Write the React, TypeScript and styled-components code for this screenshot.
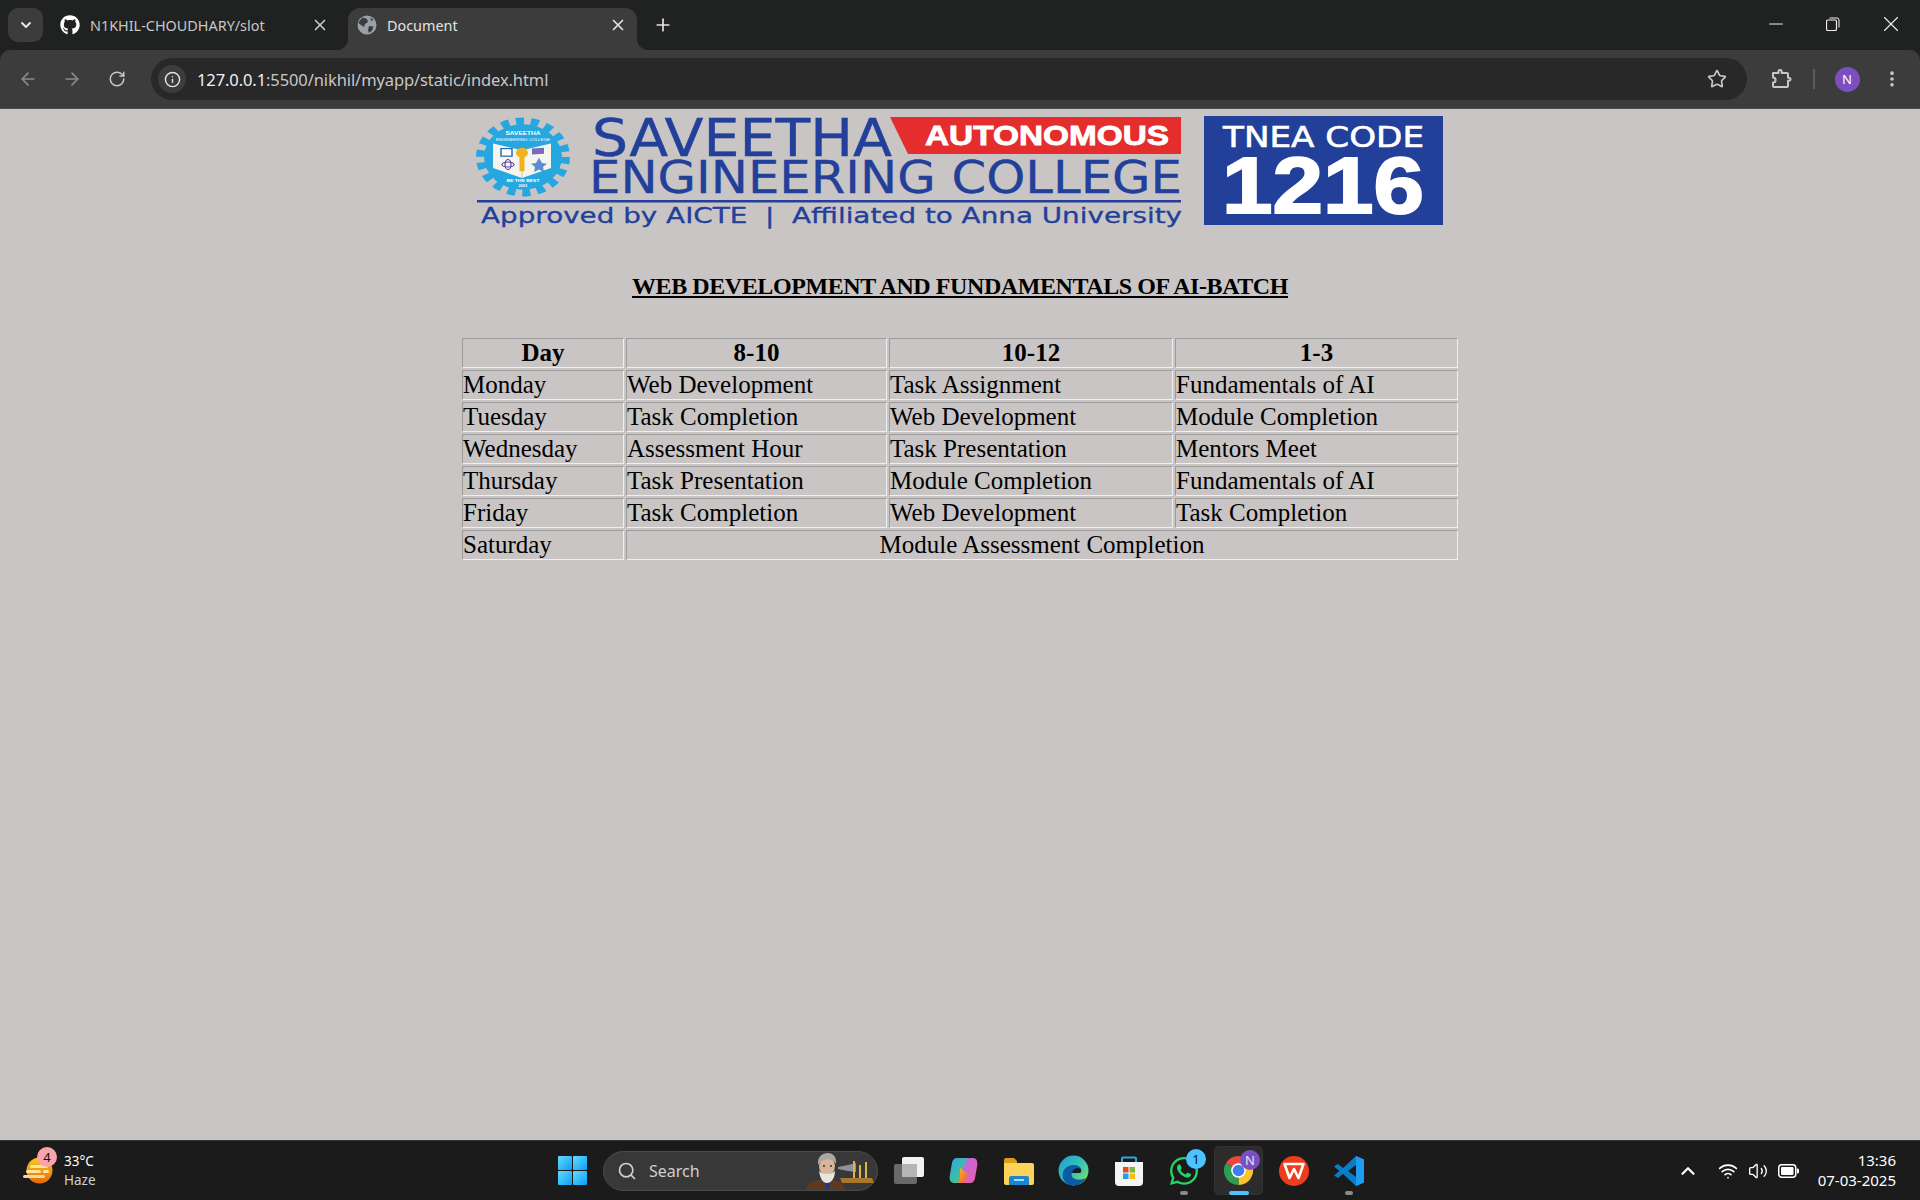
import React, { FC, ReactNode } from "react";
import styled, { createGlobalStyle } from "styled-components";
import {
  ArrowLeft,
  ArrowRight,
  ChevronDown,
  ChevronUp,
  EllipsisVertical,
  Info,
  Minus,
  Plus,
  RotateCw,
  Search,
  Star,
  Volume2,
  Wifi,
  X,
} from "lucide-react";
import { FaGithub, FaWhatsapp } from "react-icons/fa";

const UI_FONT = `"Noto Sans", "Open Sans", sans-serif`;

const GlobalStyle = createGlobalStyle`
  html, body {
    margin: 0;
    padding: 0;
    background: #c9c5c5;
  }
`;

const Screen = styled.div`
  display: flex;
  flex-direction: column;
  width: 1920px;
  height: 1200px;
  overflow: hidden;
  background: #202222;
  font-family: ${UI_FONT};
`;

/* ---------- browser chrome ---------- */

const TabStrip = styled.div`
  display: flex;
  align-items: flex-end;
  flex: none;
  height: 50px;
  padding-left: 8px;
`;

const TabMenu = styled.div`
  display: flex;
  align-items: center;
  justify-content: center;
  align-self: flex-start;
  width: 35px;
  height: 34px;
  margin-top: 8px;
  margin-right: 7px;
  border-radius: 10px;
  background: #3c3c3c;
  color: #e3e3e3;
`;

const Tab = styled.div<{ $active?: boolean; $width: number }>`
  position: relative;
  display: flex;
  align-items: center;
  gap: 10px;
  box-sizing: border-box;
  width: ${p => p.$width}px;
  height: 42px;
  padding: ${p => (p.$active ? "0 9px 8px 9px" : "0 18px 8px 10px")};
  border-radius: 12px 12px 0 0;
  background: ${p => (p.$active ? "#3c3c3c" : "transparent")};
  color: ${p => (p.$active ? "#e3e3e3" : "#c7c7c7")};
  font-size: 14.4px;

  ${p =>
    p.$active &&
    `
    &::before, &::after {
      content: "";
      position: absolute;
      bottom: 0;
      width: 12px;
      height: 12px;
    }
    &::before {
      left: -12px;
      background: radial-gradient(circle at 0 0, transparent 12px, #3c3c3c 12.5px);
    }
    &::after {
      right: -12px;
      background: radial-gradient(circle at 100% 0, transparent 12px, #3c3c3c 12.5px);
    }
  `}
`;

const TabTitle = styled.span`
  flex: 1;
  white-space: nowrap;
`;

const IconSlot = styled.div<{ $width: number; $color?: string }>`
  display: flex;
  align-items: center;
  justify-content: center;
  flex: none;
  width: ${p => p.$width}px;
  color: ${p => p.$color ?? "#c7c7c7"};
`;

const NewTab = styled(IconSlot)`
  box-sizing: border-box;
  height: 42px;
  padding-bottom: 8px;
`;

const WindowControls = styled.div`
  display: flex;
  align-self: flex-start;
  height: 48px;
  margin-left: auto;
`;

const Toolbar = styled.div`
  display: flex;
  align-items: center;
  flex: none;
  height: 58px;
  padding: 0 5px 0 6px;
  border-radius: 10px 10px 0 0;
  background: #3c3c3c;
`;

const Omnibox = styled.div`
  display: flex;
  align-items: center;
  flex: 1;
  height: 42px;
  margin: 0 12px 0 11px;
  padding: 0 20px 0 7px;
  border-radius: 21px;
  background: #282828;
`;

const InfoChip = styled.div`
  display: flex;
  align-items: center;
  justify-content: center;
  width: 28px;
  height: 28px;
  margin-right: 11px;
  border-radius: 50%;
  background: #3c3c3c;
  color: #e3e3e3;
`;

const Url = styled.div`
  flex: 1;
  color: #c7c7c7;
  font-size: 16.5px;
  letter-spacing: -0.1px;
  white-space: nowrap;
`;

const UrlHost = styled.span`
  color: #f1f1f1;
`;

const ToolbarDivider = styled.div`
  width: 2px;
  height: 20px;
  background: #5c5c5c;
`;

const Avatar = styled.div`
  display: flex;
  align-items: center;
  justify-content: center;
  width: 25px;
  height: 25px;
  border-radius: 50%;
  background: #7c4fc0;
  color: #fff;
  font-size: 13px;
`;

const ChromeEdge = styled.div`
  flex: none;
  height: 1px;
  background: #4d4d4d;
`;

/* ---------- page ---------- */

const Page = styled.main`
  flex: 1;
  padding-top: 3px;
  background: #c9c5c5;
  color: #000;
  font-family: "Liberation Serif", "Times New Roman", serif;
`;

const LogoWrap = styled.div`
  display: flex;
  justify-content: center;
  height: 116px;

  svg {
    overflow: visible;
  }
`;

const Heading = styled.h3`
  margin: 44px 0 36px;
  font-size: 24px;
  line-height: 28px;
  font-weight: 700;
  letter-spacing: -0.42px;
  text-align: center;
  text-decoration: underline;
`;

const Timetable = styled.table`
  width: 1000px;
  margin: 0 auto;
  border-collapse: separate;
  border-spacing: 2px;
  table-layout: fixed;
  font-size: 25px;
  line-height: 26px;
`;

const cellBorder = `
  padding: 1px;
  border: 1px solid;
  border-color: #9b9b9b #efefef #efefef #9b9b9b;
`;

const HeadCell = styled.th`
  ${cellBorder}
  font-weight: 700;
  text-align: center;
`;

const Cell = styled.td<{ $center?: boolean }>`
  ${cellBorder}
  padding-left: ${p => (p.$center ? 1 : 0)}px;
  text-align: ${p => (p.$center ? "center" : "left")};
`;

/* ---------- taskbar ---------- */

const Taskbar = styled.footer`
  display: flex;
  align-items: center;
  flex: none;
  box-sizing: border-box;
  height: 60px;
  border-top: 1px solid #333;
  background: #1b1b1b;
  color: #fff;
`;

const Weather = styled.div`
  display: flex;
  align-items: center;
  flex: none;
  gap: 10px;
  box-sizing: border-box;
  width: 558px;
  padding-left: 23px;
`;

const WeatherIcon = styled.div`
  position: relative;
  display: flex;
  width: 31px;
  height: 31px;
`;

const Badge = styled.span<{ $bg: string; $color?: string; $top: number; $left: number; $size?: number }>`
  position: absolute;
  top: ${p => p.$top}px;
  left: ${p => p.$left}px;
  display: flex;
  align-items: center;
  justify-content: center;
  width: ${p => p.$size ?? 20}px;
  height: ${p => p.$size ?? 20}px;
  border-radius: 50%;
  background: ${p => p.$bg};
  color: ${p => p.$color ?? "#111"};
  font-size: 13px;
  line-height: 1;
`;

const WeatherText = styled.div`
  display: flex;
  flex-direction: column;
  gap: 1px;
  font-size: 13.5px;
  line-height: 18px;
`;

const WeatherSub = styled.span`
  color: #d0d0d0;
`;

const StartButton = styled.div`
  display: grid;
  flex: none;
  grid-template-columns: 14px 14px;
  grid-auto-rows: 14px;
  gap: 1px;
  margin-right: 16px;
`;

const StartPane = styled.span`
  background: linear-gradient(135deg, #63dcff, #0c9df6);
  border-radius: 1px;
`;

const SearchPill = styled.div`
  display: flex;
  align-items: center;
  flex: none;
  box-sizing: border-box;
  width: 275px;
  height: 40px;
  padding: 0 3px 0 13px;
  border: 1px solid #4a4a4a;
  border-radius: 20px;
  background: #383838;
  color: #cfcfcf;
`;

const SearchLabel = styled.span`
  flex: 1;
  margin-left: 12px;
  font-size: 16px;
`;

const Dock = styled.div`
  display: flex;
  flex: none;
  margin-left: 3px;
`;

const DockItem = styled.div<{ $active?: boolean }>`
  position: relative;
  display: flex;
  align-items: center;
  justify-content: center;
  width: 55px;
  height: 49px;

  ${p =>
    p.$active &&
    `
    &::before {
      content: "";
      position: absolute;
      inset: 0 3px;
      border-radius: 5px;
      background: #2c2c2c;
      border: 1px solid #333;
    }
  `}

  > svg {
    position: relative;
  }
`;

const RunPill = styled.span<{ $active?: boolean }>`
  position: absolute;
  bottom: 0;
  left: 50%;
  width: ${p => (p.$active ? 20 : 8)}px;
  height: 4px;
  margin-left: ${p => (p.$active ? -10 : -4)}px;
  border-radius: 2px;
  background: ${p => (p.$active ? "#4cc2ff" : "#8a8a8a")};
`;

const Tray = styled.div`
  display: flex;
  align-items: center;
  flex: none;
  box-sizing: border-box;
  width: 247px;
  margin-left: auto;
  padding-right: 24px;
  color: #fff;
`;

const TrayGap = styled.div`
  width: 10px;
`;

const Clock = styled.div`
  display: flex;
  flex-direction: column;
  gap: 1px;
  margin-left: auto;
  font-size: 15px;
  line-height: 19px;
  text-align: right;
`;

/* ---------- drawings ---------- */

const GlobeIcon: FC = () => (
  <svg width="20" height="20" viewBox="0 0 20 20">
    <circle cx="10" cy="10" r="9.5" fill="#9aa0a6" />
    <path d="M6 2.5l4 1.5 1 3-3 2-1 3-3-2-2.5-2C2 6 4 3.5 6 2.5z" fill="#3c3c3c" />
    <path d="M12 11l4.5.5-1.5 4-3 2.5-1-3z" fill="#3c3c3c" />
    <path d="M13.5 2.5l3 2.5-2.5 1z" fill="#3c3c3c" />
  </svg>
);

const RestoreIcon: FC = () => (
  <svg width="14" height="14" viewBox="0 0 14 14" fill="none" stroke="#f0f0f0">
    <rect x="0.5" y="3" width="10" height="10.5" rx="1.5" strokeWidth="1.2" />
    <path d="M3.5 1h7.5a2 2 0 0 1 2 2v7.5" strokeWidth="1" />
  </svg>
);

const ExtensionIcon: FC = () => (
  <svg width="22" height="22" viewBox="0 0 22 22" fill="none" stroke="#c7c7c7" strokeWidth="2" strokeLinejoin="round">
    <path d="M3 5h5.5V3.6a1.6 1.6 0 0 1 3.2 0V5H17a1 1 0 0 1 1 1v3.7h1a1.5 1.5 0 0 1 0 3h-1V18a1 1 0 0 1-1 1H4a1 1 0 0 1-1-1v-3.4c1.5 0 2.600-1 2.600-2.600S4.500 9.400 3 9.400z" />
  </svg>
);

const BatteryIcon: FC = () => (
  <svg width="21" height="14" viewBox="0 0 21 14">
    <rect x="0.75" y="0.75" width="17" height="12.5" rx="3" fill="none" stroke="#fff" strokeWidth="1.5" />
    <rect x="3" y="3" width="12.500" height="8" rx="1.200" fill="#fff" />
    <path d="M19 4.500h.5a1.500 1.500 0 0 1 1.500 1.500v2a1.500 1.500 0 0 1-1.500 1.500H19z" fill="#fff" />
  </svg>
);

const WeatherGlyph: FC = () => (
  <svg width="31" height="31" viewBox="0 0 31 31">
    <defs>
      <linearGradient id="sun" x1="0" y1="0" x2="0" y2="1">
        <stop offset="0" stopColor="#fdc51c" />
        <stop offset="1" stopColor="#e86a05" />
      </linearGradient>
    </defs>
    <circle cx="16.500" cy="15.500" r="13" fill="url(#sun)" />
    <rect x="7" y="10" width="18" height="3" rx="1.500" fill="#fde7a0" />
    <rect x="3" y="15" width="15" height="3" rx="1.500" fill="#fde7a0" />
    <rect x="20" y="15" width="6" height="3" rx="1.500" fill="#fde7a0" />
    <rect x="0" y="20" width="22" height="3" rx="1.500" fill="#f6d79a" />
  </svg>
);

const SearchArt: FC = () => (
  <svg width="68" height="38" viewBox="0 0 68 38">
    <path d="M0 38c1-7 7-9 13-10h14c6 1 11 4 12 10z" fill="#5e3a21" />
    <path d="M18 28l2 10h3l2-10z" fill="#2a3a78" />
    <ellipse cx="21" cy="14" rx="8" ry="9.500" fill="#d8b59a" />
    <path d="M12 13c-1-9 5-12 10-12s9 4 8 11l-2-3-6-2-7 2z" fill="#a9a9a4" />
    <path d="M13 19c1 6 3 12 8 12s8-6 8-12c-2 2-4 3-8 3s-6-1-8-3z" fill="#e7e5df" />
    <circle cx="18" cy="14" r="1" fill="#333" />
    <circle cx="25" cy="14" r="1" fill="#333" />
    <path d="M34 26h32l2 5H36z" fill="#a8792c" />
    <path d="M32 15l10-2 8-2v9l-8-1-10-2z" fill="#8b9199" />
    <path d="M47 9h2v17h-2zM59 10h2v16h-2zM53 13h2v13h-2z" fill="#d9b646" />
  </svg>
);

const TaskViewIcon: FC = () => (
  <svg width="30" height="27" viewBox="0 0 30 27">
    <rect x="8" y="0" width="22" height="20" rx="2" fill="#f2f2f2" />
    <rect x="0" y="7" width="23" height="20" rx="2" fill="#7d7d7d" fillOpacity="0.8" />
    <rect x="8" y="7" width="15" height="13" fill="#b5b5b5" />
  </svg>
);

const CopilotIcon: FC = () => (
  <svg width="29" height="27" viewBox="0 0 29 27">
    <defs>
      <linearGradient id="copA" x1="0" y1="0" x2="1" y2="1">
        <stop offset="0" stopColor="#2fa3ea" />
        <stop offset="1" stopColor="#4fd16a" />
      </linearGradient>
      <linearGradient id="copB" x1="0" y1="0" x2="1" y2="1">
        <stop offset="0" stopColor="#b06bf0" />
        <stop offset="1" stopColor="#ee5fa7" />
      </linearGradient>
      <linearGradient id="copC" x1="0" y1="0" x2="1" y2="1">
        <stop offset="0" stopColor="#f9c22e" />
        <stop offset="1" stopColor="#f0562d" />
      </linearGradient>
    </defs>
    <path d="M8 1h10c2 0 2 1 1 3l-7 19c-1 2-2 3-4 3H5C1 26 0 22 1 17L3 6c.5-3 2-5 5-5z" fill="url(#copA)" />
    <path d="M21 26H11c-2 0-2-1-1-3l7-19c1-2 2-3 4-3h3c4 0 5 4 4 9l-2 11c-.5 3-2 5-5 5z" fill="url(#copB)" />
    <path d="M11 11l8 6-2 5c-1 3-2 4-5 4H8c2-1 3-3 3-6z" fill="url(#copC)" />
  </svg>
);

const FolderIcon: FC = () => (
  <svg width="30" height="28" viewBox="0 0 30 28">
    <path d="M0 3a2 2 0 0 1 2-2h8l3 3v6H0z" fill="#d9a016" />
    <path d="M0 6h28a2 2 0 0 1 2 2v18a2 2 0 0 1-2 2H2a2 2 0 0 1-2-2z" fill="#fbd25a" />
    <path d="M5 21a2 2 0 0 1 2-2h16a2 2 0 0 1 2 2v7H5z" fill="#1a86d0" />
    <rect x="10" y="22" width="10" height="2" fill="#a7d8f5" />
  </svg>
);

const EdgeIcon: FC = () => (
  <svg width="31" height="31" viewBox="0 0 31 31">
    <defs>
      <linearGradient id="edgeBase" x1="0" y1="0" x2="1" y2="0.800">
        <stop offset="0" stopColor="#1b9bd7" />
        <stop offset="0.600" stopColor="#38c6b4" />
        <stop offset="1" stopColor="#7be060" />
      </linearGradient>
    </defs>
    <circle cx="15.500" cy="15.500" r="15" fill="url(#edgeBase)" />
    <path d="M7 27C1 19 7 9 17 10c6 .6 8 6 5 8h-8c-2 5 5 9 14 5-5 8-15 10-21 4z" fill="#0c59a4" />
    <path d="M14 18c.5-3 3-5 6-5 3 0 4 3 2 5z" fill="#1b1b1b" />
  </svg>
);

const StoreIcon: FC = () => (
  <svg width="30" height="30" viewBox="0 0 30 30">
    <path d="M8 7V2.500A1 1 0 0 1 9 1.500h12a1 1 0 0 1 1 1V7" fill="none" stroke="#2aa9e8" strokeWidth="2" />
    <path d="M1 6h28v20a4 4 0 0 1-4 4H5a4 4 0 0 1-4-4z" fill="#f4f4f4" />
    <rect x="9" y="11" width="5.500" height="5.500" fill="#e8452a" />
    <rect x="15.500" y="11" width="5.500" height="5.500" fill="#7db83a" />
    <rect x="9" y="17.500" width="5.500" height="5.500" fill="#1aa3e8" />
    <rect x="15.500" y="17.500" width="5.500" height="5.500" fill="#fdbb10" />
  </svg>
);

const ChromeIcon: FC = () => (
  <svg width="31" height="31" viewBox="0 0 32 32">
    <path d="M16 16L3 8.500A15 15 0 0 1 29 8.500Z" fill="#e8483a" />
    <path d="M16 16L29 8.500A15 15 0 0 1 16 31Z" fill="#fbc42d" />
    <path d="M16 16L16 31A15 15 0 0 1 3 8.500Z" fill="#2f9e50" />
    <circle cx="16" cy="16" r="7.500" fill="#fff" />
    <circle cx="16" cy="16" r="6" fill="#3f7cf0" />
  </svg>
);

const WpsIcon: FC = () => (
  <svg width="30" height="30" viewBox="0 0 30 30">
    <circle cx="15" cy="15" r="15" fill="#ee3d1d" />
    <path d="M5.500 8h19l-5 14-4.500-9-4.500 9z" fill="none" stroke="#fff" strokeWidth="2.600" strokeLinejoin="round" />
  </svg>
);

const VsCodeIcon: FC = () => (
  <svg width="30" height="30" viewBox="0 0 30 30">
    <path d="M22 0l8 3.500v23L22 30 9 18l-5 4-4-2.500L5.500 15 0 10.500 4 8l5 4z" fill="#0a7cc6" />
    <path d="M22 0l8 3.500v23L22 30z" fill="#1f9cf0" />
    <path d="M22 9l-8 6 8 6z" fill="#1b1b1b" />
  </svg>
);

const CollegeLogo: FC = () => {
  const blue = "#22409a";
  const sans = `"Liberation Sans", Arial, sans-serif`;
  const wide = `"DejaVu Sans", Verdana, sans-serif`;
  return (
    <svg width="980" height="116" viewBox="0 0 980 116">
      {/* crest, the image is stretched sideways so the gear is an ellipse */}
      <g transform="translate(53 45) scale(1 0.84) translate(-53 -44)">
        <circle cx="53" cy="44" r="42.500" fill="none" stroke="#27a7df" strokeWidth="9" strokeDasharray="8 6.840" />
        <circle cx="53" cy="44" r="39" fill="#27a7df" />
        <path d="M23 28l29 8 29-8v29l-29 12-29-12z" fill="#f5f5f0" />
        <path d="M52 36v33" stroke="#d8c27a" strokeWidth="1" />
        <circle cx="52" cy="39" r="6" fill="#f2b21b" />
        <rect x="49.500" y="44" width="5" height="17" fill="#f2b21b" />
        <rect x="31" y="34" width="11" height="9" fill="#ffffff" stroke="#2c6db3" strokeWidth="1.500" />
        <ellipse cx="38" cy="53" rx="6" ry="3" fill="none" stroke="#5a3ca0" strokeWidth="1.200" />
        <ellipse cx="38" cy="53" rx="3" ry="6" fill="none" stroke="#5a3ca0" strokeWidth="1.200" />
        <path d="M62 34l12-1v7l-12 1z" fill="#7a6cb8" />
        <path d="M69 45l3 6 5 1-4 4 1 6-5-3-5 3 1-6-4-4 5-1z" fill="#5b8ed0" />
        <text x="53" y="18" fill="#fff" fontFamily={sans} fontSize="6.500" fontWeight="700" textAnchor="middle">SAVEETHA</text>
        <text x="53" y="25" fill="#fff" fontFamily={sans} fontSize="4.500" textAnchor="middle">ENGINEERING COLLEGE</text>
        <text x="53" y="74" fill="#fff" fontFamily={sans} fontSize="5" fontWeight="700" textAnchor="middle">BE THE BEST</text>
        <text x="53" y="80" fill="#fff" fontFamily={sans} fontSize="4" fontWeight="700" textAnchor="middle">2001</text>
      </g>

      {/* wordmark */}
      <text x="122" y="44" fill={blue} stroke={blue} strokeWidth="0.400" fontFamily={wide} fontSize="52" textLength="300" lengthAdjust="spacingAndGlyphs">SAVEETHA</text>
      <text x="119" y="81" fill={blue} stroke={blue} strokeWidth="0.300" fontFamily={wide} fontSize="45" textLength="593" lengthAdjust="spacingAndGlyphs">ENGINEERING COLLEGE</text>
      <rect x="7" y="88" width="704" height="2.500" fill={blue} />
      <text x="11" y="111" fill={blue} stroke={blue} strokeWidth="0.300" fontFamily={wide} fontSize="21" textLength="701" lengthAdjust="spacingAndGlyphs">{"Approved by AICTE\u00a0\u00a0|\u00a0\u00a0Affiliated to Anna University"}</text>

      {/* autonomous banner */}
      <path d="M420 5H711V42H438Z" fill="#e52d2d" />
      <text x="455" y="33" fill="#fff" stroke="#fff" strokeWidth="0.800" fontFamily={sans} fontSize="27" fontWeight="700" textLength="244" lengthAdjust="spacingAndGlyphs">AUTONOMOUS</text>

      {/* tnea box */}
      <rect x="734" y="4" width="239" height="109" fill={blue} />
      <text x="753" y="35" fill="#fff" stroke="#fff" strokeWidth="0.600" fontFamily={wide} fontSize="28" textLength="201" lengthAdjust="spacingAndGlyphs">TNEA CODE</text>
      <text x="752" y="101" fill="#fff" stroke="#fff" strokeWidth="2" fontFamily={sans} fontSize="80" fontWeight="700" textLength="202" lengthAdjust="spacingAndGlyphs">1216</text>
    </svg>
  );
};

/* ---------- data ---------- */

const rows: [string, string, string, string][] = [
  ["Monday", "Web Development", "Task Assignment", "Fundamentals of AI"],
  ["Tuesday", "Task Completion", "Web Development", "Module Completion"],
  ["Wednesday", "Assessment Hour", "Task Presentation", "Mentors Meet"],
  ["Thursday", "Task Presentation", "Module Completion", "Fundamentals of AI"],
  ["Friday", "Task Completion", "Web Development", "Task Completion"],
];

const dock: { key: string; icon: ReactNode; active?: boolean; running?: boolean; badge?: ReactNode }[] = [
  { key: "taskview", icon: <TaskViewIcon /> },
  { key: "copilot", icon: <CopilotIcon /> },
  { key: "files", icon: <FolderIcon /> },
  { key: "edge", icon: <EdgeIcon /> },
  { key: "store", icon: <StoreIcon /> },
  {
    key: "whatsapp",
    icon: <FaWhatsapp size={32} color="#25d366" />,
    running: true,
    badge: (
      <Badge $bg="#4cc2ff" $top={3} $left={30} $size={20}>
        1
      </Badge>
    ),
  },
  {
    key: "chrome",
    icon: <ChromeIcon />,
    active: true,
    running: true,
    badge: (
      <Badge $bg="#7c4fc0" $color="#e8e0f5" $top={4} $left={29} $size={20}>
        N
      </Badge>
    ),
  },
  { key: "wps", icon: <WpsIcon /> },
  { key: "vscode", icon: <VsCodeIcon />, running: true },
];

const App: FC = () => (
  <Screen>
    <GlobalStyle />

    <TabStrip>
      <TabMenu>
        <ChevronDown size={16} strokeWidth={3} />
      </TabMenu>
      <Tab $width={298}>
        <FaGithub size={20} color="#fff" />
        <TabTitle>N1KHIL-CHOUDHARY/slot</TabTitle>
        <IconSlot $width={20}>
          <X size={18} strokeWidth={2.2} />
        </IconSlot>
      </Tab>
      <Tab $active $width={289}>
        <GlobeIcon />
        <TabTitle>Document</TabTitle>
        <IconSlot $width={20} $color="#e3e3e3">
          <X size={18} strokeWidth={2.2} />
        </IconSlot>
      </Tab>
      <NewTab $width={52} $color="#e3e3e3">
        <Plus size={20} strokeWidth={2} />
      </NewTab>
      <WindowControls>
        <IconSlot $width={56} $color="#f0f0f0">
          <Minus size={22} strokeWidth={1.1} />
        </IconSlot>
        <IconSlot $width={58}>
          <RestoreIcon />
        </IconSlot>
        <IconSlot $width={58} $color="#f0f0f0">
          <X size={26} strokeWidth={1} />
        </IconSlot>
      </WindowControls>
    </TabStrip>

    <Toolbar>
      <IconSlot $width={44} $color="#8a8a8a">
        <ArrowLeft size={20} strokeWidth={2} />
      </IconSlot>
      <IconSlot $width={44} $color="#8a8a8a">
        <ArrowRight size={20} strokeWidth={2} />
      </IconSlot>
      <IconSlot $width={46} $color="#c7c7c7">
        <RotateCw size={18} strokeWidth={2} />
      </IconSlot>
      <Omnibox>
        <InfoChip>
          <Info size={17} strokeWidth={2} />
        </InfoChip>
        <Url>
          <UrlHost>127.0.0.1</UrlHost>:5500/nikhil/myapp/static/index.html
        </Url>
        <Star size={20} color="#c7c7c7" strokeWidth={2} />
      </Omnibox>
      <IconSlot $width={44}>
        <ExtensionIcon />
      </IconSlot>
      <IconSlot $width={22}>
        <ToolbarDivider />
      </IconSlot>
      <IconSlot $width={44}>
        <Avatar>N</Avatar>
      </IconSlot>
      <IconSlot $width={46}>
        <EllipsisVertical size={20} strokeWidth={2.4} />
      </IconSlot>
    </Toolbar>
    <ChromeEdge />

    <Page>
      <LogoWrap>
        <CollegeLogo />
      </LogoWrap>
      <Heading>WEB DEVELOPMENT AND FUNDAMENTALS OF AI-BATCH</Heading>
      <Timetable>
        <colgroup>
          <col style={{ width: 162 }} />
          <col style={{ width: 261 }} />
          <col style={{ width: 284 }} />
          <col />
        </colgroup>
        <thead>
          <tr>
            <HeadCell>Day</HeadCell>
            <HeadCell>8-10</HeadCell>
            <HeadCell>10-12</HeadCell>
            <HeadCell>1-3</HeadCell>
          </tr>
        </thead>
        <tbody>
          {rows.map(row => (
            <tr key={row[0]}>
              {row.map(value => (
                <Cell key={value}>{value}</Cell>
              ))}
            </tr>
          ))}
          <tr>
            <Cell>Saturday</Cell>
            <Cell $center colSpan={3}>
              Module Assessment Completion
            </Cell>
          </tr>
        </tbody>
      </Timetable>
    </Page>

    <Taskbar>
      <Weather>
        <WeatherIcon>
          <WeatherGlyph />
          <Badge $bg="#f9a3ad" $top={-8} $left={14}>
            4
          </Badge>
        </WeatherIcon>
        <WeatherText>
          <span>33°C</span>
          <WeatherSub>Haze</WeatherSub>
        </WeatherText>
      </Weather>
      <StartButton>
        <StartPane />
        <StartPane />
        <StartPane />
        <StartPane />
      </StartButton>
      <SearchPill>
        <Search size={20} strokeWidth={2} />
        <SearchLabel>Search</SearchLabel>
        <SearchArt />
      </SearchPill>
      <Dock>
        {dock.map(item => (
          <DockItem key={item.key} $active={item.active}>
            {item.icon}
            {item.badge}
            {item.running && <RunPill $active={item.active} />}
          </DockItem>
        ))}
      </Dock>
      <Tray>
        <IconSlot $width={30} $color="#fff">
          <ChevronUp size={22} strokeWidth={2.4} />
        </IconSlot>
        <TrayGap />
        <IconSlot $width={30} $color="#fff">
          <Wifi size={20} strokeWidth={2} />
        </IconSlot>
        <IconSlot $width={30} $color="#fff">
          <Volume2 size={20} strokeWidth={1.6} />
        </IconSlot>
        <IconSlot $width={30} $color="#fff">
          <BatteryIcon />
        </IconSlot>
        <Clock>
          <span>13:36</span>
          <span>07-03-2025</span>
        </Clock>
      </Tray>
    </Taskbar>
  </Screen>
);

export default App;
